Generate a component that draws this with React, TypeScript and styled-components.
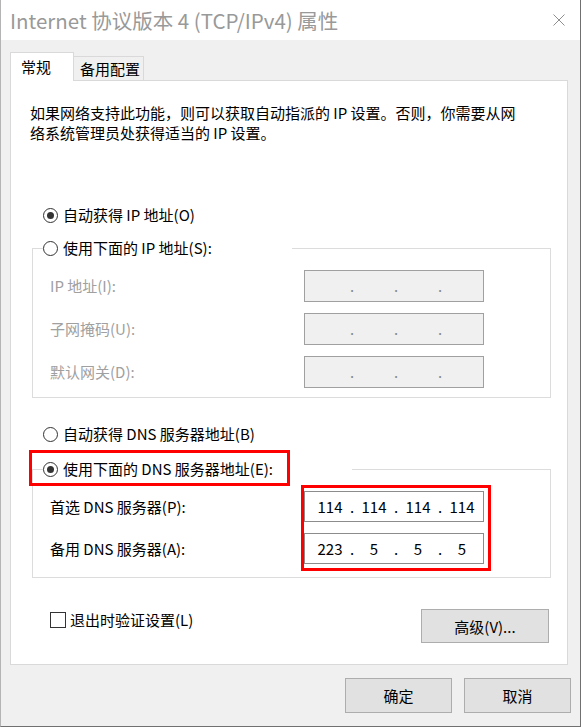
import styled, { createGlobalStyle } from 'styled-components'

const GlobalStyle = createGlobalStyle`
  html, body {
    margin: 0;
    padding: 0;
    background: #ffffff;
  }
  body {
    font-family: 'Noto Sans CJK SC', 'Noto Sans', sans-serif;
  }
  * {
    box-sizing: border-box;
  }
`

type IpProps = { value?: string[]; disabled?: boolean }

const IpField = ({ value, disabled }: IpProps) => {
  const parts = value ?? ['', '', '', '']
  return (
    <IpBox $disabled={disabled}>
      {parts.map((part, i) => (
        <IpPart key={i}>
          <Segment>{part}</Segment>
          {i < 3 && <Dot $disabled={disabled}>.</Dot>}
        </IpPart>
      ))}
    </IpBox>
  )
}

const Radio = ({ checked }: { checked?: boolean }) => (
  <RadioCircle>{checked && <RadioDot />}</RadioCircle>
)

export default function App() {
  return (
    <>
      <GlobalStyle />
      <Window>
        <TitleBar>
          <Title>Internet 协议版本 4 (TCP/IPv4) 属性</Title>
          <svg width="12" height="12" viewBox="0 0 12 12">
            <path d="M0.5 0.5 L11.5 11.5 M11.5 0.5 L0.5 11.5" stroke="#8f8f8f" strokeWidth="1" fill="none" />
          </svg>
        </TitleBar>

        <TabRow>
          <Tab $active>常规</Tab>
          <Tab>备用配置</Tab>
        </TabRow>

        <Panel>
          <Description>
            如果网络支持此功能，则可以获取自动指派的 IP 设置。否则，你需要从网
            <br />
            络系统管理员处获得适当的 IP 设置。
          </Description>

          <OptionRow $top={62}>
            <Radio checked />
            自动获得 IP 地址(O)
          </OptionRow>

          <GroupBox $top={12}>
            <Legend $width={249}>
              <Radio />
              使用下面的 IP 地址(S):
            </Legend>
            <FieldList>
              <FieldRow>
                <FieldLabel $disabled>IP 地址(I):</FieldLabel>
                <IpField disabled />
              </FieldRow>
              <FieldRow>
                <FieldLabel $disabled>子网掩码(U):</FieldLabel>
                <IpField disabled />
              </FieldRow>
              <FieldRow>
                <FieldLabel $disabled>默认网关(D):</FieldLabel>
                <IpField disabled />
              </FieldRow>
            </FieldList>
          </GroupBox>

          <OptionRow $top={26}>
            <Radio />
            自动获得 DNS 服务器地址(B)
          </OptionRow>

          <GroupBox $top={14} $bottom={13}>
            <Legend $width={309}>
              <Radio checked />
              使用下面的 DNS 服务器地址(E):
              <LegendHighlight />
            </Legend>
            <FieldList>
              <FieldRow $height={31}>
                <FieldLabel>首选 DNS 服务器(P):</FieldLabel>
                <IpField value={['114', '114', '114', '114']} />
              </FieldRow>
              <FieldRow $height={31}>
                <FieldLabel>备用 DNS 服务器(A):</FieldLabel>
                <IpField value={['223', '5', '5', '5']} />
              </FieldRow>
              <InputsHighlight />
            </FieldList>
          </GroupBox>

          <BottomRow>
            <CheckRow>
              <CheckBox />
              退出时验证设置(L)
            </CheckRow>
            <Button $width={128} $height={34}>高级(V)...</Button>
          </BottomRow>
        </Panel>

        <Footer>
          <Button $width={107} $height={35}>确定</Button>
          <Button $width={107} $height={35}>取消</Button>
        </Footer>
      </Window>
    </>
  )
}

const Window = styled.div`
  width: 581px;
  height: 727px;
  background: #f0f0f0;
  border-left: 1px solid #b4b4b4;
  border-right: 1px solid #707070;
  border-bottom: 1px solid #707070;
  display: flex;
  flex-direction: column;
  font-size: 15px;
  color: #000;
`

const TitleBar = styled.div`
  height: 40px;
  flex-shrink: 0;
  background: #ffffff;
  display: flex;
  align-items: center;
  justify-content: space-between;
  padding: 0 15px 0 9px;
`

const Title = styled.span`
  font-size: 20.5px;
  line-height: 26px;
  color: #999999;
`

const TabRow = styled.div`
  margin-top: 12px;
  margin-bottom: -1px;
  padding-left: 9px;
  height: 29px;
  display: flex;
  align-items: flex-start;
  position: relative;
  z-index: 1;
`

const Tab = styled.div<{ $active?: boolean }>`
  display: flex;
  align-items: center;
  border: 1px solid #d9d9d9;
  border-bottom: none;
  line-height: 20px;
  background: ${(p) => (p.$active ? '#ffffff' : '#f0f0f0')};
  width: ${(p) => (p.$active ? '64px' : '70px')};
  height: ${(p) => (p.$active ? '29px' : '24px')};
  margin-top: ${(p) => (p.$active ? '0' : '4px')};
  padding-left: ${(p) => (p.$active ? '10px' : '6px')};
  ${(p) => !p.$active && 'border-left: none;'}
`

const Panel = styled.div`
  margin-left: 9px;
  width: 558px;
  height: 585px;
  flex-shrink: 0;
  background: #ffffff;
  border: 1px solid #d9d9d9;
  display: flex;
  flex-direction: column;
`

const Description = styled.p`
  margin: 22px 0 0 19px;
  line-height: 20px;
  white-space: nowrap;
`

const OptionRow = styled.div<{ $top: number }>`
  margin: ${(p) => p.$top}px 0 0 32px;
  height: 20px;
  line-height: 20px;
  display: flex;
  align-items: center;
`

const RadioCircle = styled.span`
  width: 15px;
  height: 15px;
  border: 1px solid #333333;
  border-radius: 50%;
  background: #ffffff;
  margin-right: 5px;
  display: flex;
  align-items: center;
  justify-content: center;
  flex-shrink: 0;
`

const RadioDot = styled.span`
  width: 7px;
  height: 7px;
  border-radius: 50%;
  background: #333333;
`

const GroupBox = styled.fieldset<{ $top: number; $bottom?: number }>`
  margin: ${(p) => p.$top}px 0 0 21px;
  width: 519px;
  min-width: 0;
  padding: 0 0 ${(p) => p.$bottom ?? 9}px 0;
  border: 1px solid #dcdcdc;
`

const Legend = styled.legend<{ $width: number }>`
  margin-left: 10px;
  padding: 0;
  width: ${(p) => p.$width}px;
  height: 22px;
  line-height: 22px;
  display: flex;
  align-items: center;
  position: relative;
`

const LegendHighlight = styled.span`
  position: absolute;
  left: -14px;
  top: -8px;
  width: 261px;
  height: 36px;
  border: 3px solid #ff0000;
  pointer-events: none;
`

const FieldList = styled.div`
  position: relative;
  display: flex;
  flex-direction: column;
  gap: 11px;
  margin-top: 11px;
`

const InputsHighlight = styled.span`
  position: absolute;
  left: 268px;
  top: -6px;
  width: 190px;
  height: 86px;
  border: 3px solid #ff0000;
  pointer-events: none;
`

const FieldRow = styled.div<{ $height?: number }>`
  display: flex;
  align-items: center;
  height: ${(p) => p.$height ?? 32}px;
  padding-left: 17px;
`

const FieldLabel = styled.span<{ $disabled?: boolean }>`
  width: 254px;
  line-height: 20px;
  color: ${(p) => (p.$disabled ? '#a0a0a0' : '#000000')};
`

const IpBox = styled.div<{ $disabled?: boolean }>`
  width: 180px;
  height: 100%;
  display: flex;
  align-items: center;
  padding-left: 7px;
  background: ${(p) => (p.$disabled ? '#f0f0f0' : '#ffffff')};
  border: 1px solid ${(p) => (p.$disabled ? '#a0a0a0' : '#8c8c8c')};
  line-height: 20px;
`

const IpPart = styled.span`
  display: flex;
`

const Segment = styled.span`
  width: 36px;
  text-align: center;
`

const Dot = styled.span<{ $disabled?: boolean }>`
  width: 8px;
  text-align: center;
  color: ${(p) => (p.$disabled ? '#8a8a8a' : '#000000')};
`

const BottomRow = styled.div`
  margin-top: 31px;
  padding: 0 18px 0 39px;
  display: flex;
  justify-content: space-between;
  align-items: flex-start;
`

const CheckRow = styled.div`
  margin-top: 1px;
  height: 20px;
  line-height: 20px;
  display: flex;
  align-items: center;
`

const CheckBox = styled.span`
  width: 16px;
  height: 16px;
  border: 1px solid #333333;
  background: #ffffff;
  margin-right: 4px;
`

const Button = styled.button<{ $width: number; $height: number }>`
  width: ${(p) => p.$width}px;
  height: ${(p) => p.$height}px;
  background: #e1e1e1;
  border: 1px solid #adadad;
  font-family: inherit;
  font-size: 15px;
  color: #000000;
  padding: 0;
`

const Footer = styled.div`
  margin-top: 13px;
  padding-right: 9px;
  display: flex;
  justify-content: flex-end;
  gap: 12px;
`
